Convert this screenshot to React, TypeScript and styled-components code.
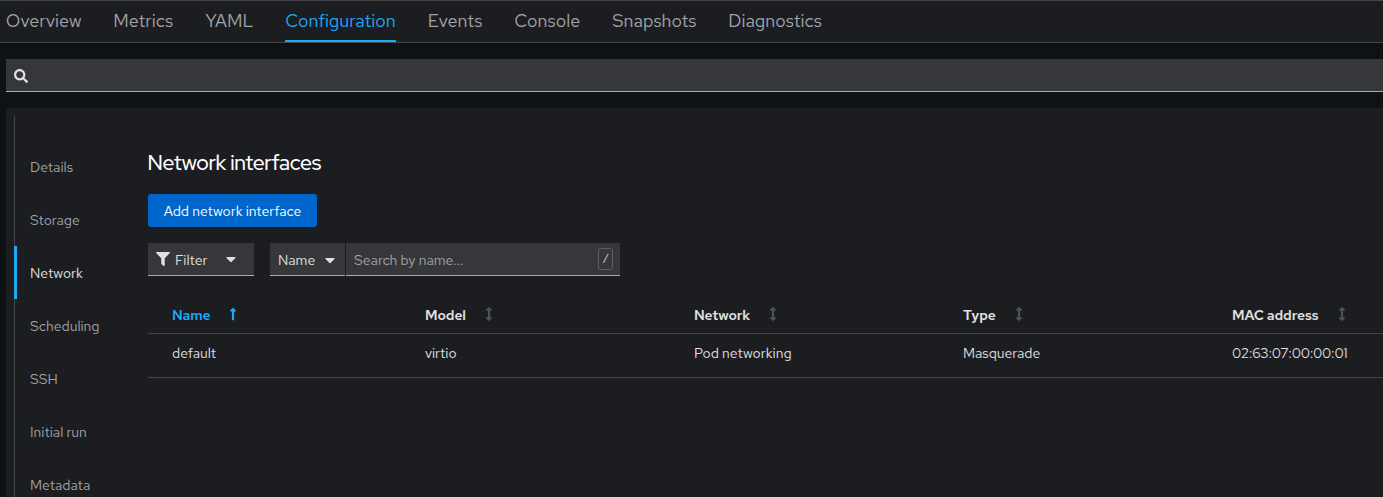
import React from 'react';
import styled, { createGlobalStyle, css } from 'styled-components';
import { FaArrowsAltV, FaCaretDown, FaFilter, FaLongArrowAltUp, FaSearch } from 'react-icons/fa';

const GlobalStyle = createGlobalStyle`
  *, *::before, *::after { box-sizing: border-box; }
  body {
    margin: 0;
    overflow: hidden;
    background: #0f1214;
    color: #e0e0e0;
    font: 400 14px/21px 'Red Hat Text', Inter, 'Open Sans', sans-serif;
  }
  button, input { font: inherit; color: inherit; border: 0; border-radius: 0; margin: 0; padding: 0; }
`;

const Page = styled.div`
  display: flex;
  flex-direction: column;
  height: 497px;
  overflow: hidden;
`;

const TabBar = styled.nav`
  flex: none;
  display: flex;
  gap: 32px;
  height: 43px;
  padding-left: 5.5px;
  background: #1b1d21;
  border-top: 1px solid #444548;
  border-bottom: 1px solid #444548;
`;

const Tab = styled.button<{ $width: number; $tracking: number; $active?: boolean }>`
  flex: none;
  width: ${p => p.$width}px;
  height: 41px;
  padding: 0 0 3px 0.3px !important;
  background: none;
  text-align: left;
  white-space: nowrap;
  font-size: 18px !important;
  letter-spacing: ${p => p.$tracking}px;
  color: ${p => (p.$active ? '#1fa7f8' : '#a3a3a5')} !important;
  ${p => p.$active && css`box-shadow: inset 0 -2px #1fa7f8;`}
`;

const GlobalSearch = styled.div`
  flex: none;
  display: flex;
  align-items: center;
  height: 33px;
  margin: 16px 0 16px 6px;
  padding: 1px 0 0 8px;
  background: #36373a;
  border-bottom: 1px solid #aaabac;
  font-size: 14px;
`;

const Panel = styled.div`
  flex: 1;
  display: flex;
  align-items: flex-start;
  min-height: 0;
  margin-left: 6px;
  padding: 8px 0 0 8px;
  background: #1b1d21;
`;

const SideNav = styled.nav`
  flex: none;
  width: 134px;
  height: 420px;
  padding-top: 24px;
  background: linear-gradient(#444548, #444548) 0 0 / 1px 100% no-repeat;
`;

const SideItem = styled.div<{ $active?: boolean }>`
  display: flex;
  align-items: center;
  height: 53px;
  padding: 2px 0 0 13px;
  border-left: 3px solid ${p => (p.$active ? '#1fa7f8' : 'transparent')};
  color: ${p => (p.$active ? '#e0e0e0' : '#a3a3a5')};
`;

const Content = styled.main`
  flex: 1;
  min-width: 0;
  padding-top: 32px;
`;

const Title = styled.h2`
  margin: 0 0 16px -0.5px;
  font-family: 'Red Hat Display', 'Red Hat Text', Inter, sans-serif;
  font-size: 21px;
  line-height: 30px;
  font-weight: 500;
  letter-spacing: -0.3px;
  color: #fff;
`;

const PrimaryButton = styled.button`
  display: block;
  width: 169px;
  height: 33px;
  padding-top: 1px;
  border-radius: 3px !important;
  background: #0066cc;
  color: #fff !important;
`;

const Toolbar = styled.div`
  display: flex;
  margin-top: 16px;
  height: 33px;
`;

const Toggle = styled.button<{ $width: number }>`
  display: flex;
  align-items: center;
  width: ${p => p.$width}px;
  padding: 1px 0 0 8px !important;
  background: #36373a;
  border-bottom: 1px solid #aaabac !important;
`;

const FilterIcon = styled(FaFilter)`
  font-size: 14px;
  margin: -1px 5px 0 0;
`;

const Caret = styled(FaCaretDown)<{ $gap: number; $lift?: number }>`
  font-size: 16px;
  margin-left: ${p => p.$gap}px;
  margin-bottom: ${p => p.$lift ?? 0}px;
`;

const ToggleText = styled.span<{ $width: number }>`
  width: ${p => p.$width}px;
  padding-top: 2px;
  text-align: left;
`;

const AttributeSearch = styled.div`
  display: flex;
  margin-left: 16px;
  gap: 1px;
`;

const SearchField = styled.div`
  display: flex;
  align-items: center;
  width: 274px;
  padding: 0 7px 0 8px;
  background: #36373a;
  border-bottom: 1px solid #aaabac;
`;

const SearchInput = styled.input`
  flex: 1;
  min-width: 0;
  height: 100%;
  padding-top: 2px !important;
  background: none;
  outline: 0;
  &::placeholder { color: #a3a3a5; opacity: 1; }
`;

const KeyHint = styled.kbd`
  display: flex;
  align-items: center;
  justify-content: center;
  width: 15px;
  height: 22px;
  padding-top: 1px;
  border: 1px solid #5d5e61;
  border-radius: 3px;
  font: 12px 'Liberation Mono', monospace;
  color: #c8c8c9;
`;

const Table = styled.div`
  margin-top: 21px;
`;

const Row = styled.div<{ $height: number; $top: number }>`
  display: grid;
  grid-template-columns: 261px 269px 269px 269px 1fr;
  height: ${p => p.$height}px;
  padding-top: ${p => p.$top}px;
  border-bottom: 1px solid #444548;
`;

const Cell = styled.div<{ $tracking?: number }>`
  padding-left: 16px;
  white-space: nowrap;
  letter-spacing: ${p => p.$tracking ?? 0}px;
  &:first-child { padding-left: 24px; }
`;

const HeadCell = styled(Cell)<{ $sorted?: boolean }>`
  display: flex;
  font-weight: 600;
  color: ${p => (p.$sorted ? '#1fa7f8' : '#e0e0e0')};
`;

const HeadText = styled.span<{ $width: number }>`
  width: ${p => p.$width}px;
`;

const SortIcon = styled.span<{ $sorted?: boolean }>`
  display: flex;
  margin: 2px 0 0 16px;
  font-size: 14px;
  color: ${p => (p.$sorted ? '#1fa7f8' : '#4f5255')};
`;

const tabs = [
  { label: 'Overview', width: 75.5, tracking: 0.05 },
  { label: 'Metrics', width: 60, tracking: 0 },
  { label: 'YAML', width: 48, tracking: 0.1 },
  { label: 'Configuration', width: 110.5, tracking: 0 },
  { label: 'Events', width: 54.5, tracking: 0 },
  { label: 'Console', width: 66, tracking: 0 },
  { label: 'Snapshots', width: 84, tracking: 0 },
  { label: 'Diagnostics', width: 95, tracking: 0 },
];

const sections = ['Details', 'Storage', 'Network', 'Scheduling', 'SSH', 'Initial run', 'Metadata'];

const columns = [
  { label: 'Name', width: 38, tracking: -0.1 },
  { label: 'Model', width: 41, tracking: -0.1 },
  { label: 'Network', width: 56, tracking: -0.15 },
  { label: 'Type', width: 33, tracking: 0 },
  { label: 'MAC address', width: 87, tracking: -0.1 },
];

const nic = [
  { text: 'default', tracking: 0 },
  { text: 'virtio', tracking: 0 },
  { text: 'Pod networking', tracking: 0.03 },
  { text: 'Masquerade', tracking: 0 },
  { text: '02:63:07:00:00:01', tracking: -0.2 },
];

export default function App() {
  return (
    <Page>
      <GlobalStyle />
      <TabBar>
        {tabs.map(t => (
          <Tab key={t.label} $width={t.width} $tracking={t.tracking} $active={t.label === 'Configuration'}>
            {t.label}
          </Tab>
        ))}
      </TabBar>
      <GlobalSearch>
        <FaSearch />
      </GlobalSearch>
      <Panel>
        <SideNav>
          {sections.map(s => (
            <SideItem key={s} $active={s === 'Network'}>{s}</SideItem>
          ))}
        </SideNav>
        <Content>
          <Title>Network interfaces</Title>
          <PrimaryButton>Add network interface</PrimaryButton>
          <Toolbar>
            <Toggle $width={106}>
              <FilterIcon />
              <ToggleText $width={33}>Filter</ToggleText>
              <Caret $gap={15} $lift={2} />
            </Toggle>
            <AttributeSearch>
              <Toggle $width={75}>
                <ToggleText $width={37}>Name</ToggleText>
                <Caret $gap={7} />
              </Toggle>
              <SearchField>
                <SearchInput placeholder="Search by name..." />
                <KeyHint>/</KeyHint>
              </SearchField>
            </AttributeSearch>
          </Toolbar>
          <Table>
            <Row $height={37} $top={8}>
              {columns.map((c, i) => (
                <HeadCell key={c.label} $tracking={c.tracking} $sorted={i === 0}>
                  <HeadText $width={c.width}>{c.label}</HeadText>
                  <SortIcon $sorted={i === 0}>{i === 0 ? <FaLongArrowAltUp /> : <FaArrowsAltV />}</SortIcon>
                </HeadCell>
              ))}
            </Row>
            <Row $height={44} $top={9}>
              {nic.map(c => (
                <Cell key={c.text} $tracking={c.tracking}>{c.text}</Cell>
              ))}
            </Row>
          </Table>
        </Content>
      </Panel>
    </Page>
  );
}
